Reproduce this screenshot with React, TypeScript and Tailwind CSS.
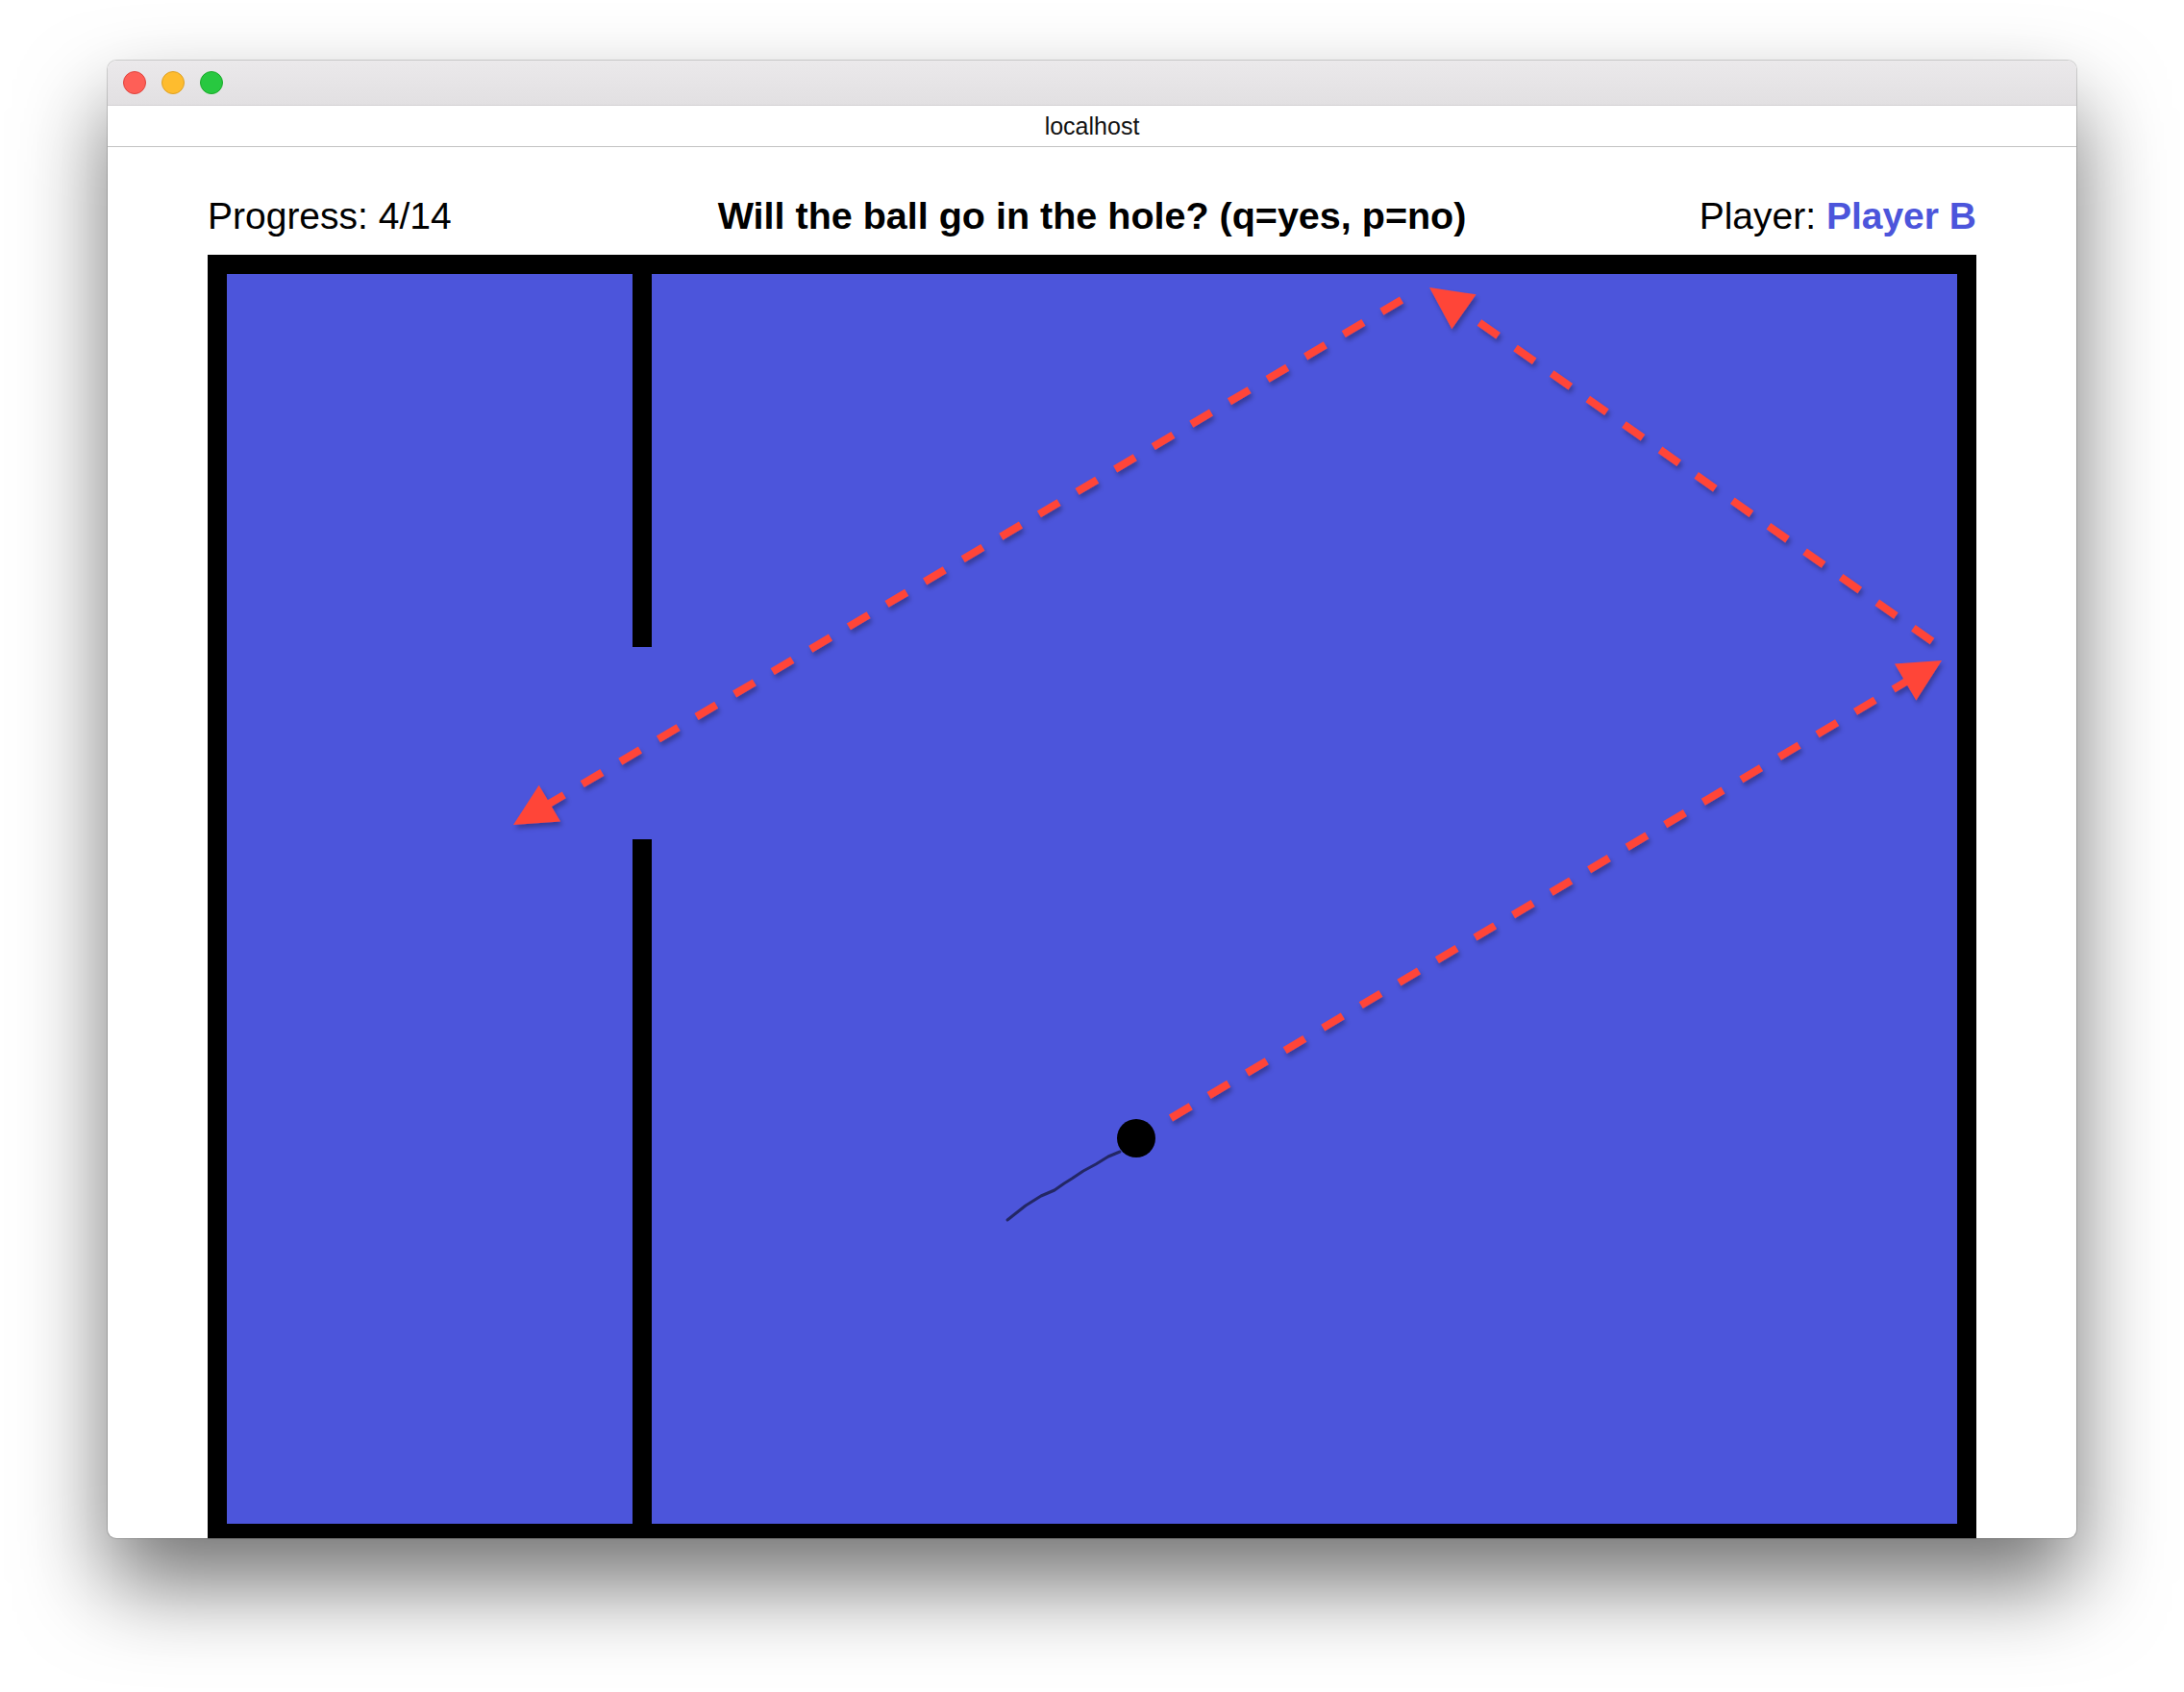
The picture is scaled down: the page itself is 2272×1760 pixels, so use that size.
import React from 'react';

type Pt = [number, number];

const RED = '#ff4539';

// dashed shot arrow, head drawn as a triangle at the tip
const ShotArrow = ({ from, to }: { from: Pt; to: Pt }) => {
  const dx = to[0] - from[0];
  const dy = to[1] - from[1];
  const len = Math.hypot(dx, dy);
  const ux = dx / len;
  const uy = dy / len;
  const head = 44;
  const half = 22;
  const bx = to[0] - ux * head;
  const by = to[1] - uy * head;
  const pts = [
    `${to[0]},${to[1]}`,
    `${bx - uy * half},${by + ux * half}`,
    `${bx + uy * half},${by - ux * half}`,
  ].join(' ');

  return (
    <g filter="url(#shot-shadow)">
      <line
        x1={from[0]}
        y1={from[1]}
        x2={bx + ux * 4}
        y2={by + uy * 4}
        stroke={RED}
        strokeWidth={8}
        strokeDasharray="24 22"
      />
      <polygon points={pts} fill={RED} />
    </g>
  );
};

const Board = () => {
  const trail: Pt[] = [
    [929, 913],
    [917, 918],
    [904, 926],
    [891, 933],
    [879, 941],
    [871, 946],
    [861, 953],
    [847, 959],
    [831, 969],
    [812, 984],
  ];

  return (
    <div className="relative w-[1840px] h-[1340px] shrink-0 border-[20px] border-black bg-[#4c55db]">
      <svg className="absolute inset-0 w-full h-full" viewBox="0 0 1800 1300">
        <defs>
          <filter id="shot-shadow" filterUnits="userSpaceOnUse" x="0" y="0" width="1800" height="1300">
            <feDropShadow dx="2" dy="4" stdDeviation="2.5" floodColor="#000" floodOpacity="0.3" />
          </filter>
        </defs>

        {/* divider wall with the gap */}
        <rect x={422} y={0} width={20} height={388} fill="#000" />
        <rect x={422} y={588} width={20} height={712} fill="#000" />

        <polyline
          points={trail.map(p => p.join(',')).join(' ')}
          fill="none"
          stroke="#1c2050"
          strokeOpacity={0.85}
          strokeWidth={3}
          strokeLinejoin="round"
          strokeLinecap="round"
        />

        <ShotArrow from={[982, 878]} to={[1784, 402]} />
        <ShotArrow from={[1774, 382]} to={[1251, 14]} />
        <ShotArrow from={[1222, 27]} to={[298, 573]} />

        <circle cx={946} cy={899} r={20} fill="#000" />
      </svg>
    </div>
  );
};

const App = () => {
  return (
    <div className="w-[2272px] h-[1760px] overflow-hidden bg-white pt-[63px] pl-[112px]">
      <div className="w-[2048px] h-[1537px] flex flex-col overflow-hidden rounded-[9px] bg-white shadow-[0_0_0_1px_rgba(0,0,0,0.16),0_48px_90px_rgba(0,0,0,0.55)]">
        <div className="h-[46px] shrink-0 flex items-center gap-[16px] pl-[16px] bg-gradient-to-b from-[#ebe9eb] to-[#e2e0e2]">
          <span className="w-[24px] h-[24px] rounded-full bg-[#fe5f57] border border-[#e0443e]" />
          <span className="w-[24px] h-[24px] rounded-full bg-[#febc2e] border border-[#dea123]" />
          <span className="w-[24px] h-[24px] rounded-full bg-[#28c840] border border-[#1aab29]" />
        </div>

        <div className="h-[44px] shrink-0 flex items-center justify-center border-t border-b border-t-[#d2d0d2] border-b-[#c2c2c2] bg-white font-['Liberation_Sans',Arial,sans-serif] text-[25px] leading-none text-[#111]">
          localhost
        </div>

        <div className="flex flex-col px-[104px] pt-[52px] font-['Liberation_Sans',Arial,sans-serif] text-black">
          <div className="grid grid-cols-[1fr_auto_1fr] items-baseline mb-[20px] text-[39px] leading-none">
            <div>Progress: 4/14</div>
            <div className="font-bold text-[39.5px]">Will the ball go in the hole? (q=yes, p=no)</div>
            <div className="text-right">
              Player: <span className="font-bold text-[#4c55db]">Player B</span>
            </div>
          </div>

          <Board />
        </div>
      </div>
    </div>
  );
};

export default App;
